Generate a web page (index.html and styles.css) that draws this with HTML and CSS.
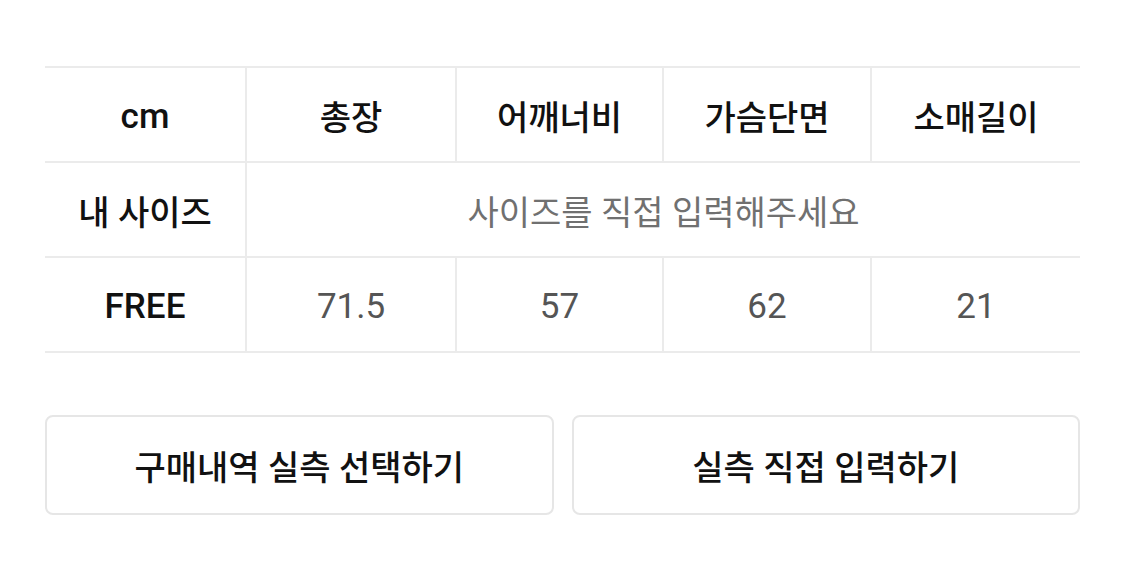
FILE: index.html
```html
<!DOCTYPE html>
<html lang="ko">
<head>
<meta charset="utf-8">
<link rel="stylesheet" href="styles.css">
</head>
<body>
<div class="page">
  <div class="size-table">
    <div class="cell head latin">cm</div>
    <div class="cell head">총장</div>
    <div class="cell head">어깨너비</div>
    <div class="cell head">가슴단면</div>
    <div class="cell head last">소매길이</div>

    <div class="cell head">내 사이즈</div>
    <div class="cell placeholder span4 last">사이즈를 직접 입력해주세요</div>

    <div class="cell head latin">FREE</div>
    <div class="cell value latin">71.5</div>
    <div class="cell value latin">57</div>
    <div class="cell value latin">62</div>
    <div class="cell value latin last">21</div>
  </div>
  <div class="actions">
    <button class="btn">구매내역 실측 선택하기</button>
    <button class="btn">실측 직접 입력하기</button>
  </div>
</div>
</body>
</html>
```
FILE: styles.css
```css
* { box-sizing: border-box; }
html, body { margin: 0; padding: 0; background: #fff; }
body {
  font-family: Roboto, "Noto Sans CJK KR", sans-serif;
  color: #111;
}
.page {
  padding: 66px 45px 0 45px;
}
.size-table {
  display: grid;
  grid-template-columns: 202px 210px 207px 208px 208px;
  grid-auto-rows: 95px;
  border-top: 2px solid #ebebeb;
}
.cell {
  display: flex;
  align-items: center;
  justify-content: center;
  border-bottom: 2px solid #ebebeb;
  border-right: 2px solid #ebebeb;
  font-size: 34px;
  padding-top: 2px;
}
.cell.latin { font-size: 35px; padding-top: 4px; }
.cell.last { border-right: none; }
.head { color: #111; font-weight: 500; }
.value { color: #555; font-weight: 400; }
.placeholder { color: #707070; font-weight: 400; }
.span4 { grid-column: span 4; }
.actions {
  display: flex;
  gap: 18px;
  margin-top: 62px;
}
.btn {
  flex: 1;
  height: 100px;
  background: #fff;
  border: 2px solid #e6e6e6;
  border-radius: 8px;
  font-family: Roboto, "Noto Sans CJK KR", sans-serif;
  font-size: 34px;
  font-weight: 500;
  color: #111;
  padding: 0;
}
```
